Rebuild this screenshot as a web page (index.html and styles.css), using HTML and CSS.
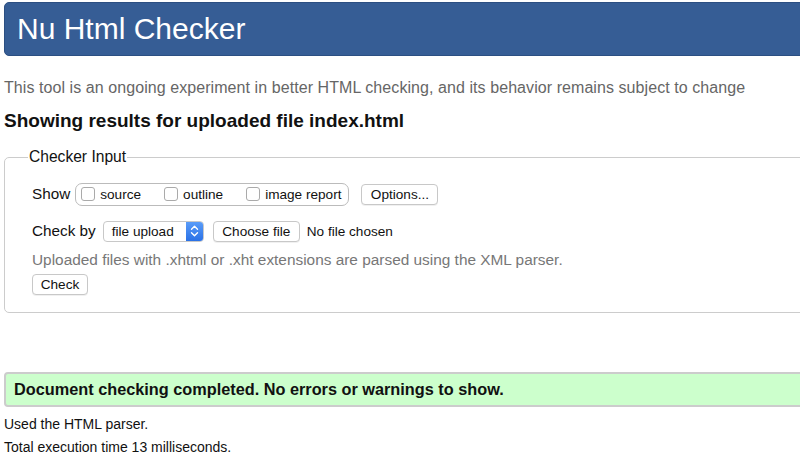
FILE: index.html
```html
<!DOCTYPE html>
<html>
<head>
<meta charset="utf-8">
<link rel="stylesheet" href="styles.css">
</head>
<body>
<header class="banner"><h1 class="title">Nu Html Checker</h1></header>
<p class="intro">This tool is an ongoing experiment in better HTML checking, and its behavior remains subject to change</p>
<h2 class="results">Showing results for uploaded file index.html</h2>
<fieldset class="input">
  <legend class="legend">Checker Input</legend>
  <div class="row">
    <span class="label">Show</span>
    <span class="group">
      <span class="opt"><span class="box"></span>source</span>
      <span class="opt"><span class="box"></span>outline</span>
      <span class="opt"><span class="box"></span>image report</span>
    </span>
    <span class="btn btn-options">Options...</span>
  </div>
  <div class="row row2">
    <span class="label">Check by</span>
    <span class="select">
      <span class="select-text">file upload</span>
      <span class="stepper"><svg width="9" height="14" viewBox="0 0 9 14"><path d="M1.5 5.2 4.5 2.2 7.5 5.2M1.5 8.8 4.5 11.8 7.5 8.8" fill="none" stroke="#fff" stroke-width="1.4" stroke-linecap="round" stroke-linejoin="round"/></svg></span>
    </span>
    <span class="btn btn-file">Choose file</span>
    <span class="nofile">No file chosen</span>
  </div>
  <p class="hint">Uploaded files with .xhtml or .xht extensions are parsed using the XML parser.</p>
  <span class="btn btn-check">Check</span>
</fieldset>
<div class="success">Document checking completed. No errors or warnings to show.</div>
<p class="note note1">Used the HTML parser.</p>
<p class="note note2">Total execution time 13 milliseconds.</p>
</body>
</html>
```
FILE: styles.css
```css
html, body {
  margin: 0;
  padding: 0;
  background: #fff;
  overflow: hidden;
}
body {
  font-family: "Liberation Sans", Arial, sans-serif;
  color: #111;
  width: 800px;
  height: 464px;
}
.banner {
  margin: 2px -10px 0 4px;
  height: 52px;
  background: #365d95;
  border: 1px solid #2c4f82;
  border-radius: 5px;
  display: flex;
  align-items: center;
}
.title {
  margin: 0 0 0 12px;
  font-size: 30px;
  font-weight: normal;
  color: #fff;
  line-height: 34px;
}
.intro {
  margin: 22px 0 0 4px;
  font-size: 16px;
  letter-spacing: 0.07px;
  line-height: 20px;
  color: #666;
  white-space: nowrap;
}
.results {
  margin: 12px 0 0 4px;
  font-size: 19px;
  line-height: 22px;
  font-weight: bold;
  color: #111;
}
.input {
  margin: 16px -20px 0 4px;
  padding: 16px 24px 17px 27px;
  border: 1px solid #ccc;
  border-radius: 5px;
  min-width: 0;
}
.legend {
  font-size: 15.6px;
  line-height: 18px;
  padding: 0 1px;
  margin-left: -4px;
  color: #111;
}
.row {
  display: flex;
  align-items: center;
  height: 24px;
  font-size: 15.3px;
}
.row2 {
  margin-top: 13px;
}
.label {
  margin-right: 5px;
}
.group {
  display: flex;
  align-items: center;
  height: 21px;
  border: 1px solid #bbb;
  border-radius: 7px;
  padding: 0 7px 0 5px;
  font-size: 13.6px;
}
.opt {
  display: flex;
  align-items: center;
  margin-right: 23px;
}
.opt:last-child {
  margin-right: 0;
}
.box {
  width: 12px;
  height: 12px;
  border: 1px solid #aaa;
  border-radius: 3px;
  margin-right: 5px;
  background: #fff;
}
.btn {
  display: inline-flex;
  align-items: center;
  justify-content: center;
  height: 19px;
  border: 1px solid #c8c8c8;
  border-radius: 4px;
  font-size: 13.6px;
  background: #fff;
  box-shadow: 0 1px 0 rgba(0,0,0,0.06);
  color: #111;
}
.btn-options {
  margin-left: 12px;
  width: 75px;
}
.select {
  display: flex;
  align-items: center;
  height: 19px;
  width: 99px;
  border: 1px solid #c8c8c8;
  border-radius: 4px;
  font-size: 13.6px;
  overflow: hidden;
  margin-left: 2px;
}
.select-text {
  flex: 1;
  padding-left: 8px;
}
.stepper {
  width: 17px;
  height: 100%;
  background: linear-gradient(#5a9cf8, #2a71e6);
  display: flex;
  align-items: center;
  justify-content: center;
}
.btn-file {
  margin-left: 9px;
  width: 85px;
}
.nofile {
  margin-left: 7px;
  font-size: 13.6px;
}
.hint {
  margin: 8px 0 0 0;
  font-size: 15.4px;
  line-height: 18px;
  color: #777;
  white-space: nowrap;
}
.btn-check {
  margin-top: 5px;
  height: 19px;
  width: 54px;
}
.success {
  margin: 59px -10px 0 4px;
  height: 31px;
  background: #ccffcc;
  border: 2px solid #ccc;
  border-radius: 4px;
  display: flex;
  align-items: center;
  padding-left: 8px;
  font-size: 16.3px;
  font-weight: bold;
  color: #111;
}
.note {
  margin: 9px 0 0 4px;
  font-size: 14px;
  line-height: 16px;
  color: #111;
}
.note2 {
  margin-top: 7px;
}
```
